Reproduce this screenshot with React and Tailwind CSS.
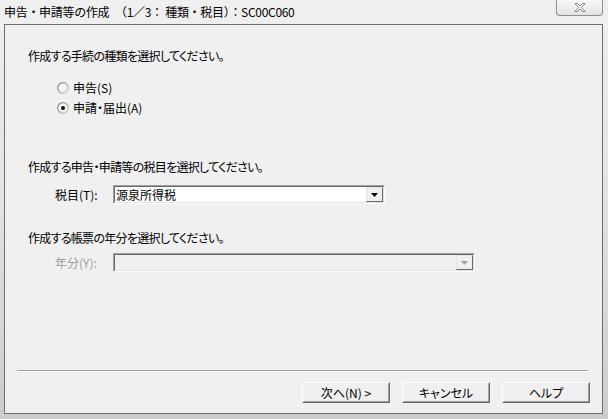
import React from 'react';

const FONT = "font-['Noto_Sans_CJK_JP','Noto_Sans_CJK_SC','Liberation_Sans',sans-serif]";
const PALT = "[font-feature-settings:'palt']";

const Radio = ({ checked }) => (
  <svg width="12" height="12" viewBox="0 0 12 12" className="shrink-0">
    <defs>
      <linearGradient id="rg" x1="0" y1="0" x2="1" y2="1">
        <stop offset="0" stopColor="#7a7a7a" />
        <stop offset="1" stopColor="#d8d8d8" />
      </linearGradient>
      <radialGradient id="rf" cx="0.4" cy="0.4" r="0.6">
        <stop offset="0" stopColor="#ffffff" />
        <stop offset="1" stopColor="#e6e6e6" />
      </radialGradient>
    </defs>
    <circle cx="6" cy="6" r="5.3" fill="url(#rf)" stroke="url(#rg)" strokeWidth="1.2" />
    {checked && <circle cx="6" cy="6" r="2" fill="#111" />}
  </svg>
);

const ArrowButton = ({ disabled }) => (
  <div className="w-[17px] h-full border border-t-[#e3e3e3] border-l-[#e3e3e3] border-r-[#696969] border-b-[#696969] bg-[#f0f0f0] flex items-center justify-center">
    <svg width="7" height="4" viewBox="0 0 7 4">
      <path d="M0 0H7L3.5 4Z" fill={disabled ? '#a0a0a0' : '#000'} />
    </svg>
  </div>
);

const Select = ({ value, width, disabled }) => (
  <div
    className={`h-[19px] border border-t-[#a0a0a0] border-l-[#a0a0a0] border-r-white border-b-white ${width}`}
  >
    <div
      className={`h-full border border-t-[#696969] border-l-[#696969] border-r-[#e3e3e3] border-b-[#e3e3e3] flex items-stretch ${
        disabled ? 'bg-[#f0f0f0]' : 'bg-white'
      }`}
    >
      <div className="flex-1 pl-[1px] text-[12px] leading-[15px] text-black">{value}</div>
      <ArrowButton disabled={disabled} />
    </div>
  </div>
);

const Button = ({ children }) => (
  <div className="w-[88px] h-[21px] border border-t-white border-l-white border-r-[#696969] border-b-[#696969]">
    <div className="h-full border border-t-[#f0f0f0] border-l-[#f0f0f0] border-r-[#a0a0a0] border-b-[#a0a0a0] bg-[#f0f0f0] flex items-center justify-center text-[12px] text-black">
      {children}
    </div>
  </div>
);

export default function App() {
  return (
    <div
      className={`w-[608px] h-[419px] flex flex-col bg-linear-to-b from-[#f0f0f0] via-[#e2e2e2] to-[#cccccc] ${FONT}`}
    >
      <div className="h-[24px] relative flex items-center pl-[4px] text-[12px] tracking-[-0.3px] text-black">
        申告・申請等の作成　（1／3： 種類・税目）：SC00C060
        <div className="absolute right-[5px] top-0 w-[47px] h-[16px] border border-t-0 border-[#8e8e8e] rounded-b-[4px] bg-linear-to-b from-[#f7f7f7] to-[#e4e4e4] flex items-center justify-center">
          <svg width="12" height="9" viewBox="0 0 12 9">
            <path
              d="M1 0.5H3.5L6 3L8.5 0.5H11L7.3 4.5L11 8.5H8.5L6 6L3.5 8.5H1L4.7 4.5Z"
              fill="#fafafa"
              stroke="#6a6a6a"
              strokeWidth="0.8"
            />
          </svg>
        </div>
      </div>

      <div
        className={`ml-[4px] mr-[5px] mb-[5px] flex-1 border border-[#6e6e6e] bg-[#f0f0f0] flex flex-col text-[12px] text-black ${PALT}`}
      >
        <div className="mt-[23px] pl-[23px] h-[16px] leading-[16px] tracking-[-0.7px]">
          作成する手続の種類を選択してください。
        </div>

        <div className="mt-[14px] pl-[52px] flex flex-col">
          <div className="h-[20px] flex items-center gap-[4px]">
            <Radio />
            <span>申告(S)</span>
          </div>
          <div className="h-[20px] flex items-center gap-[4px]">
            <Radio checked />
            <span>申請・届出(A)</span>
          </div>
        </div>

        <div className="mt-[41px] pl-[23px] h-[16px] leading-[16px] tracking-[-0.7px]">
          作成する申告・申請等の税目を選択してください。
        </div>
        <div className="mt-[10px] pl-[50px] flex items-center">
          <span className="w-[58px]">税目(T):</span>
          <Select value="源泉所得税" width="w-[272px]" />
        </div>

        <div className="mt-[26px] pl-[23px] h-[16px] leading-[16px] tracking-[-0.7px]">
          作成する帳票の年分を選択してください。
        </div>
        <div className="mt-[7px] pl-[50px] flex items-center">
          <span className="w-[58px] text-[#a0a0a0]">年分(Y):</span>
          <Select value="" width="w-[362px]" disabled />
        </div>

        <div className="flex-1" />

        <div className="ml-[12px] mr-[14px] border-t border-t-[#a0a0a0] border-b border-b-white" />
        <div className="mt-[10px] mb-[10px] mr-[12px] flex justify-end gap-[12px]">
          <Button>次へ(N) &gt;</Button>
          <Button>キャンセル</Button>
          <Button>ヘルプ</Button>
        </div>
      </div>
    </div>
  );
}
